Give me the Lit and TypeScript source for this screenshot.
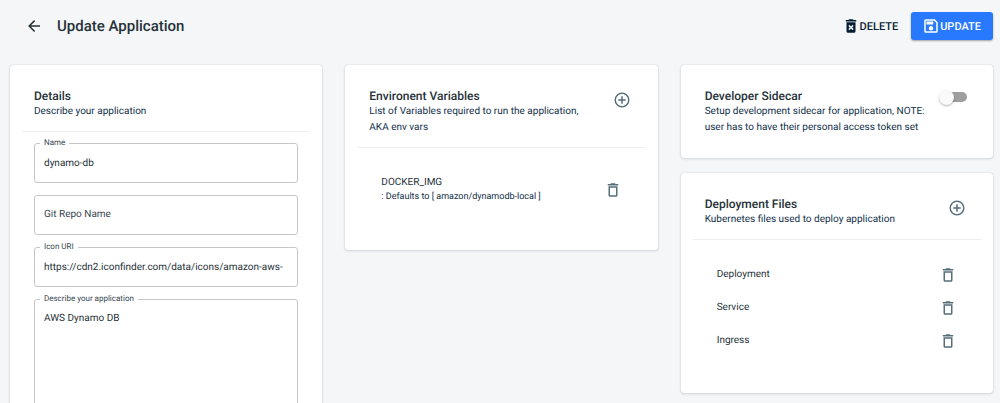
import { LitElement, html, css, svg } from "lit";
import { customElement, property, state } from "lit/decorators.js";

const ICONS: Record<string, string> = {
  back: "M20 11v2H8l5.5 5.5-1.42 1.42L4.16 12l7.92-7.92L13.5 5.5 8 11h12z",
  add: "M12 20c-4.41 0-8-3.59-8-8s3.59-8 8-8 8 3.59 8 8-3.59 8-8 8m0-18A10 10 0 0 0 2 12a10 10 0 0 0 10 10 10 10 0 0 0 10-10A10 10 0 0 0 12 2m1 5h-2v4H7v2h4v4h2v-4h4v-2h-4V7z",
  trash: "M6 19a2 2 0 0 0 2 2h8a2 2 0 0 0 2-2V7H6v12M8 9h8v10H8V9m7.5-5-1-1h-5l-1 1H5v2h14V4h-3.5z",
  trashFilled:
    "M6 19a2 2 0 0 0 2 2h8a2 2 0 0 0 2-2V7H6v12zm2.46-7.12 1.41-1.41L12 12.59l2.12-2.12 1.41 1.41L13.41 14l2.12 2.12-1.41 1.41L12 15.41l-2.12 2.12-1.41-1.41L10.59 14l-2.13-2.12zM15.5 4l-1-1h-5l-1 1H5v2h14V4h-3.5z",
  save: "M17 3H5a2 2 0 0 0-2 2v14a2 2 0 0 0 2 2h14a2 2 0 0 0 2-2V7l-4-4m2 16H5V5h11.17L19 7.83V19m-7-7a3 3 0 0 0-3 3 3 3 0 0 0 3 3 3 3 0 0 0 3-3 3 3 0 0 0-3-3M6 6h9v4H6V6z",
};

@customElement("app-icon")
class AppIcon extends LitElement {
  @property() name = "";

  static styles = css`
    :host {
      display: inline-flex;
      flex: none;
    }
    .icon {
      display: block;
      width: 18px;
      height: 18px;
      fill: currentColor;
    }
  `;

  render() {
    return html`<svg class="icon" viewBox="0 0 24 24" aria-hidden="true">
      ${svg`<path d=${ICONS[this.name]}></path>`}
    </svg>`;
  }
}

@customElement("app-card")
class AppCard extends LitElement {
  @property() heading = "";
  @property() description = "";
  @property({ type: Boolean }) plain = false;

  static styles = css`
    :host {
      display: block;
      background: #fff;
      border-radius: 3px;
      box-shadow: 0 0 1px rgba(38, 50, 56, 0.3), 0 1px 3px rgba(38, 50, 56, 0.14);
    }
    .head {
      display: flex;
      justify-content: space-between;
      gap: 10px;
      margin: 0 12px;
      padding: 24px 12px 11px;
      border-bottom: 1px solid #eee;
    }
    .head.plain {
      padding-bottom: 22px;
      border-bottom: 0;
    }
    .title {
      margin: 0;
      color: #263238;
      font-size: 12px;
      font-weight: 500;
      line-height: 15px;
    }
    .text {
      margin: 0;
      color: #12304a;
      font-size: 10px;
      line-height: 16px;
    }
  `;

  render() {
    return html`
      <div class="head ${this.plain ? "plain" : ""}">
        <div>
          <h2 class="title">${this.heading}</h2>
          <p class="text">${this.description}</p>
        </div>
        <slot name="action"></slot>
      </div>
      <slot></slot>
    `;
  }
}

@customElement("app-root")
class AppRoot extends LitElement {
  @state() private sidecar = false;
  @state() private variables = [{ name: "DOCKER_IMG", fallback: "amazon/dynamodb-local" }];
  @state() private files = ["Deployment", "Service", "Ingress"];

  static styles = css`
    :host {
      display: block;
      box-sizing: border-box;
      height: 100vh;
      overflow-y: auto;
      scrollbar-width: none;
      padding: 12px 7px 12px 10px;
      background: #f4f6f8;
      color: #263238;
      font-family: Roboto, "Liberation Sans", sans-serif;
      font-size: 10px;
      text-rendering: geometricPrecision;
    }
    *,
    *::before {
      box-sizing: border-box;
    }
    button {
      display: inline-flex;
      align-items: center;
      justify-content: center;
      border: 0;
      padding: 0;
      background: none;
      font: inherit;
      text-rendering: inherit;
      cursor: pointer;
    }
    .bar {
      display: flex;
      align-items: center;
      justify-content: space-between;
      margin-bottom: 25px;
    }
    .heading,
    .actions {
      display: flex;
      align-items: center;
    }
    .heading {
      gap: 14px;
      padding-left: 15px;
    }
    .back {
      color: #263238;
    }
    .page-title {
      margin: 0;
      font-size: 15px;
      font-weight: 500;
      line-height: 20px;
    }
    .actions {
      gap: 1px;
    }
    .actions .btn {
      height: 28px;
      padding: 0 12px 0 11px;
      border-radius: 3px;
      color: #051e34;
      font-size: 11px;
      font-weight: 500;
    }
    .actions .primary {
      background: #2979ff;
      color: #fff;
      box-shadow: 0 1px 2px rgba(0, 0, 0, 0.35);
    }
    .columns {
      display: grid;
      grid-template-columns: repeat(3, minmax(0, 1fr));
      align-items: start;
      gap: 23px;
    }
    .stack {
      display: grid;
      gap: 15px;
    }
    .form {
      display: grid;
      gap: 12px;
      padding: 11px 24px 24px;
    }
    .field {
      display: grid;
      position: relative;
    }
    .control {
      width: 100%;
      height: 40px;
      margin: 0;
      padding: 0 9px;
      border: 1px solid #c4c6c8;
      border-radius: 3px;
      outline: 0;
      background: #fff;
      color: #263238;
      font: inherit;
      text-rendering: inherit;
      resize: none;
    }
    .area {
      height: 144px;
      padding: 11px 9px;
      line-height: 16px;
    }
    .label {
      position: absolute;
      top: -5px;
      left: 6px;
      padding: 0 4px;
      background: #fff;
      color: #37474f;
      font-size: 8px;
      line-height: 10px;
    }
    .label.resting {
      top: 12px;
      font-size: 10px;
      line-height: 16px;
    }
    .list {
      margin: 0;
      padding: 18px 36px 36px;
      list-style: none;
    }
    .row {
      display: flex;
      align-items: center;
      justify-content: space-between;
      height: 33px;
      line-height: 15px;
    }
    .row.tall {
      height: 48px;
    }
    .note {
      color: #12304a;
      font-size: 9px;
    }
    .icon-btn {
      color: #546e7a;
    }
    .add {
      align-self: start;
      padding: 2px 3px;
    }
    .switch {
      appearance: none;
      position: relative;
      flex: none;
      width: 26px;
      height: 10px;
      margin: 3px 2px 0 0;
      border-radius: 5px;
      background: #9e9e9e;
      cursor: pointer;
    }
    .switch::before {
      content: "";
      position: absolute;
      top: -2px;
      left: -2px;
      width: 15px;
      height: 15px;
      border-radius: 50%;
      background: #fafafa;
      box-shadow: 0 1px 2px rgba(0, 0, 0, 0.3);
    }
    .switch:checked {
      background: #94bcff;
    }
    .switch:checked::before {
      left: 13px;
      background: #2979ff;
    }
  `;

  private removeVariable(index: number) {
    this.variables = this.variables.filter((_, i) => i !== index);
  }

  private removeFile(index: number) {
    this.files = this.files.filter((_, i) => i !== index);
  }

  render() {
    return html`
      <header class="bar">
        <div class="heading">
          <button class="back" aria-label="Back"><app-icon name="back"></app-icon></button>
          <h1 class="page-title">Update Application</h1>
        </div>
        <div class="actions">
          <button class="btn"><app-icon name="trashFilled"></app-icon>DELETE</button>
          <button class="btn primary"><app-icon name="save"></app-icon>UPDATE</button>
        </div>
      </header>

      <main class="columns">
        <app-card heading="Details" description="Describe your application">
          <form class="form">
            <div class="field">
              <input class="control" id="name" type="text" value="dynamo-db" />
              <label class="label" for="name">Name</label>
            </div>
            <div class="field">
              <input class="control" id="repo" type="text" />
              <label class="label resting" for="repo">Git Repo Name</label>
            </div>
            <div class="field">
              <input
                class="control"
                id="icon"
                type="text"
                value="https://cdn2.iconfinder.com/data/icons/amazon-aws-"
              />
              <label class="label" for="icon">Icon URI</label>
            </div>
            <div class="field">
              <textarea class="control area" id="about" .value=${"AWS Dynamo DB"}></textarea>
              <label class="label" for="about">Describe your application</label>
            </div>
          </form>
        </app-card>

        <app-card
          heading="Environent Variables"
          description="List of Variables required to run the application, AKA env vars"
        >
          <button class="icon-btn add" slot="action" aria-label="Add variable">
            <app-icon name="add"></app-icon>
          </button>
          <ul class="list">
            ${this.variables.map(
              (item, i) => html`<li class="row tall">
                <div>
                  <div>${item.name}</div>
                  <div class="note">: Defaults to [ ${item.fallback} ]</div>
                </div>
                <button
                  class="icon-btn"
                  aria-label="Remove ${item.name}"
                  @click=${() => this.removeVariable(i)}
                >
                  <app-icon name="trash"></app-icon>
                </button>
              </li>`
            )}
          </ul>
        </app-card>

        <div class="stack">
          <app-card
            plain
            heading="Developer Sidecar"
            description="Setup development sidecar for application, NOTE: user has to have their personal access token set"
          >
            <input
              class="switch"
              slot="action"
              type="checkbox"
              role="switch"
              aria-label="Developer Sidecar"
              .checked=${this.sidecar}
              @change=${() => (this.sidecar = !this.sidecar)}
            />
          </app-card>

          <app-card
            heading="Deployment Files"
            description="Kubernetes files used to deploy application"
          >
            <button class="icon-btn add" slot="action" aria-label="Add file">
              <app-icon name="add"></app-icon>
            </button>
            <ul class="list">
              ${this.files.map(
                (file, i) => html`<li class="row">
                  <span>${file}</span>
                  <button
                    class="icon-btn"
                    aria-label="Remove ${file}"
                    @click=${() => this.removeFile(i)}
                  >
                    <app-icon name="trash"></app-icon>
                  </button>
                </li>`
              )}
            </ul>
          </app-card>
        </div>
      </main>
    `;
  }
}
